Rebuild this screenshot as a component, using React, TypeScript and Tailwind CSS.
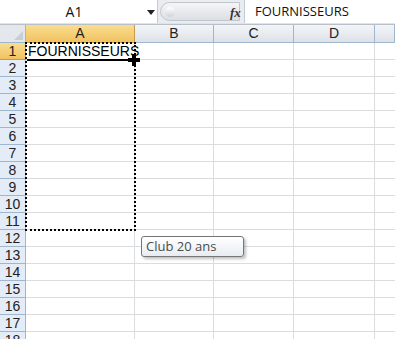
import React from "react";

const rows = Array.from({ length: 18 }, (_, i) => i + 1);
const cols = ["A", "B", "C", "D", ""];

export default function App() {
  return (
    <div className="w-[395px] h-[339px] overflow-hidden bg-white relative font-['Liberation_Sans',Arial,sans-serif]">
      {/* formula bar */}
      <div className="flex h-[25px] bg-[#dfe4ea] border-b border-[#b9c0c9]">
        <div className="w-[158px] h-[23px] bg-white flex items-center relative border-r border-[#c5cbd3]">
          <span className="w-[140px] text-center text-[14px] text-[#111] font-['Open_Sans',sans-serif] pl-[8px]">A1</span>
          <svg width="8" height="5" viewBox="0 0 8 5" className="absolute left-[147px] top-[10px]">
            <path d="M0 0 L8 0 L4 5 Z" fill="#222" />
          </svg>
        </div>
        <div className="w-[86px] h-[23px] flex items-center relative bg-[#e9ecf0]">
          <div className="ml-[2px] h-[19px] w-[80px] rounded-l-full bg-gradient-to-b from-[#f4f5f7] to-[#dcdfe4] border border-[#c2c7ce] flex items-center">
            <div className="ml-[4px] w-[10px] h-[10px] rounded-full bg-gradient-to-b from-white to-[#cfd3d9]" />
          </div>
          <span className="absolute left-[72px] top-[3px] text-[13px] italic font-bold text-[#333] font-['Liberation_Serif',serif]">fx</span>
        </div>
        <div className="flex-1 h-[23px] bg-white flex items-center pl-[10px] border-l border-[#c5cbd3]">
          <span className="text-[13px] text-[#111] font-['Open_Sans',sans-serif]">FOURNISSEURS</span>
        </div>
      </div>

      {/* grid */}
      <div className="grid grid-cols-[26px_109px_79px_80px_81px_1fr] grid-rows-[18px] auto-rows-[17px]">
        <div className="bg-[#e4e8ed] border-r border-b border-[#9eb6ce] flex items-end justify-end pr-[2px] pb-[2px]">
          <svg width="9" height="9" viewBox="0 0 9 9">
            <path d="M9 0 L9 9 L0 9 Z" fill="#c8ced6" />
          </svg>
        </div>
        {cols.map((c, i) => (
          <div
            key={c + i}
            className={
              i === 0
                ? "bg-gradient-to-b from-[#f9de8f] to-[#f1c15f] border-r border-b border-[#c29b4d] text-[14px] text-[#222] flex items-center justify-center"
                : "bg-gradient-to-b from-[#f3f5f8] to-[#dde2e8] border-r border-b border-[#9eb6ce] text-[14px] text-[#222] flex items-center justify-center"
            }
          >
            {c}
          </div>
        ))}
        {rows.map((r) => (
          <React.Fragment key={r}>
            <div
              className={
                r === 1
                  ? "bg-gradient-to-b from-[#f9de8f] to-[#f1c15f] border-r border-b border-[#c29b4d] text-[14px] text-[#222] flex items-center justify-center"
                  : "bg-[#e4ecf7] border-r border-b border-[#9eb6ce] text-[14px] text-[#222] flex items-center justify-center"
              }
            >
              {r}
            </div>
            <div className="border-r border-b border-[#dadcdd] text-[14px] text-black leading-[16px] pl-[2px] overflow-visible whitespace-nowrap">
              {r === 1 ? "FOURNISSEURS" : ""}
            </div>
            <div className="border-r border-b border-[#dadcdd]" />
            <div className="border-r border-b border-[#dadcdd]" />
            <div className="border-r border-b border-[#dadcdd]" />
            <div className="border-b border-[#dadcdd]" />
          </React.Fragment>
        ))}
      </div>

      {/* copy marquee around A1:A11 */}
      <div className="absolute left-[25px] top-[42px] w-[111px] h-[189px] border-[2px] border-dotted border-black pointer-events-none" />
      {/* thick line + move cursor */}
      <div className="absolute left-[27px] top-[59px] w-[106px] h-[2px] bg-black" />
      <svg width="12" height="12" viewBox="0 0 12 12" className="absolute left-[128px] top-[54px]">
        <path d="M4 0 H8 V4 H12 V8 H8 V12 H4 V8 H0 V4 H4 Z" fill="#000" />
      </svg>

      {/* tooltip */}
      <div className="absolute left-[141px] top-[236px] w-[103px] h-[21px] bg-gradient-to-b from-white to-[#e8ecf2] border border-[#767676] rounded-[3px] shadow-[2px_2px_3px_rgba(0,0,0,0.25)] flex items-center pl-[4px]">
        <span className="text-[13px] text-[#4c4c4c] font-['Open_Sans',sans-serif]">Club 20 ans</span>
      </div>
    </div>
  );
}
